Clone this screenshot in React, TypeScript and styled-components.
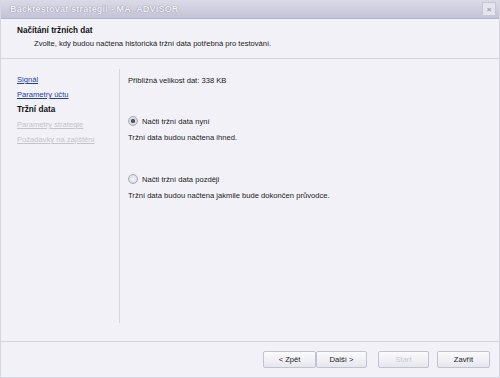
import * as React from 'react'
import styled, { createGlobalStyle } from 'styled-components'

const Global = createGlobalStyle`
  html, body { margin: 0; padding: 0; background: #f2f1f7; }
  body { font-family: "Liberation Sans", Arial, sans-serif; }
`

const Window = styled.div`
  width: 500px;
  height: 378px;
  box-sizing: border-box;
  display: flex;
  flex-direction: column;
  background: #f2f1f7;
  border-left: 1px solid #d6d6e0;
  border-bottom: 1px solid #d6d6e0;
  border-right: 1px solid #d6d6e0;
  font-size: 7.6px;
  color: #1a1a1a;
`

const TitleBar = styled.div`
  height: 18px;
  flex: none;
  display: flex;
  align-items: center;
  justify-content: space-between;
  padding: 0 3px 0 9px;
  background: linear-gradient(#dadae7, #c3c3d7);
  border-bottom: 1px solid #b5b5c9;
`

const Title = styled.span`
  font-weight: bold;
  font-size: 9px;
  letter-spacing: 0.2px;
  color: #f0f0f5;
  text-shadow: 0 0 1px #9090a6, 0 0 1px #9090a6;
`

const CloseBox = styled.div`
  width: 12px;
  height: 12px;
  border: 1px solid #c6c6d4;
  background: #e4e4ee;
  display: flex;
  align-items: center;
  justify-content: center;
  color: #9a9aaa;
  font-size: 8px;
  font-weight: bold;
`

const Header = styled.div`
  flex: none;
  height: 40px;
  box-sizing: border-box;
  padding: 7px 0 0 16px;
  border-bottom: 1px solid #d3d3dd;
`

const HeaderTitle = styled.div`
  font-weight: bold;
  font-size: 8.2px;
  color: #111;
`

const HeaderText = styled.div`
  margin: 4px 0 0 17px;
`

const Body = styled.div`
  flex: 1;
  display: flex;
  border-bottom: 1px solid #d3d3dd;
`

const Nav = styled.div`
  width: 118px;
  flex: none;
  padding: 16px 0 0 16px;
  box-sizing: border-box;
  display: flex;
  flex-direction: column;
  gap: 6px;
`

const NavItem = styled.a<{ $state: 'link' | 'current' | 'off' }>`
  color: ${p => (p.$state === 'link' ? '#1c3fa8' : p.$state === 'current' ? '#111' : '#c4c4cc')};
  text-decoration: ${p => (p.$state === 'current' ? 'none' : 'underline')};
  font-weight: ${p => (p.$state === 'current' ? 'bold' : 'normal')};
  font-size: ${p => (p.$state === 'current' ? '8.2px' : '7.6px')};
`

const Divider = styled.div`
  width: 1px;
  flex: none;
  margin: 10px 0 18px;
  background: #d6d6de;
`

const Content = styled.div`
  flex: 1;
  padding: 17px 0 0 8px;
  display: flex;
  flex-direction: column;
`

const Option = styled.label<{ $top: number }>`
  display: flex;
  align-items: center;
  gap: 4px;
  margin-top: ${p => p.$top}px;
`

const Radio = styled.span<{ $on?: boolean }>`
  width: 8px;
  height: 8px;
  border-radius: 50%;
  border: 1px solid #a9a9b6;
  background: radial-gradient(circle, ${p => (p.$on ? '#555 0 1.8px, #dcdce4 2.4px' : '#f6f6f8 0, #dcdce4 4px')});
`

const Note = styled.div`
  margin-top: 7px;
`

const Footer = styled.div`
  flex: none;
  height: 35px;
  display: flex;
  align-items: center;
  justify-content: flex-end;
  padding-right: 9px;
`

const Button = styled.button<{ $gap?: number; $w?: number; $disabled?: boolean }>`
  width: ${p => p.$w ?? 51}px;
  height: 17px;
  margin-left: ${p => p.$gap ?? 0}px;
  border: 1px solid #c3c3d0;
  border-radius: 2px;
  background: linear-gradient(#fbfbfd, #e6e6ee);
  font-family: inherit;
  font-size: 7.6px;
  color: ${p => (p.$disabled ? '#c8c8d0' : '#222')};
  padding: 0;
`

export default function App() {
  return (
    <>
      <Global />
      <Window>
        <TitleBar>
          <Title>Backtestovat strategii - MA_ADVISOR</Title>
          <CloseBox>×</CloseBox>
        </TitleBar>
        <Header>
          <HeaderTitle>Načítání tržních dat</HeaderTitle>
          <HeaderText>Zvolte, kdy budou načtena historická tržní data potřebná pro testování.</HeaderText>
        </Header>
        <Body>
          <Nav>
            <NavItem $state="link">Signál</NavItem>
            <NavItem $state="link">Parametry účtu</NavItem>
            <NavItem $state="current">Tržní data</NavItem>
            <NavItem $state="off">Parametry strategie</NavItem>
            <NavItem $state="off">Požadavky na zajištění</NavItem>
          </Nav>
          <Divider />
          <Content>
            <div>Přibližná velikost dat: 338 KB</div>
            <Option $top={31}>
              <Radio $on />
              Načti tržní data nyní
            </Option>
            <Note>Tržní data budou načtena ihned.</Note>
            <Option $top={32}>
              <Radio />
              Načti tržní data později
            </Option>
            <Note>Tržní data budou načtena jakmile bude dokončen průvodce.</Note>
          </Content>
        </Body>
        <Footer>
          <Button $w={53}>&lt; Zpět</Button>
          <Button>Další &gt;</Button>
          <Button $gap={11} $disabled>Start</Button>
          <Button $gap={8} $w={53}>Zavřít</Button>
        </Footer>
      </Window>
    </>
  )
}
